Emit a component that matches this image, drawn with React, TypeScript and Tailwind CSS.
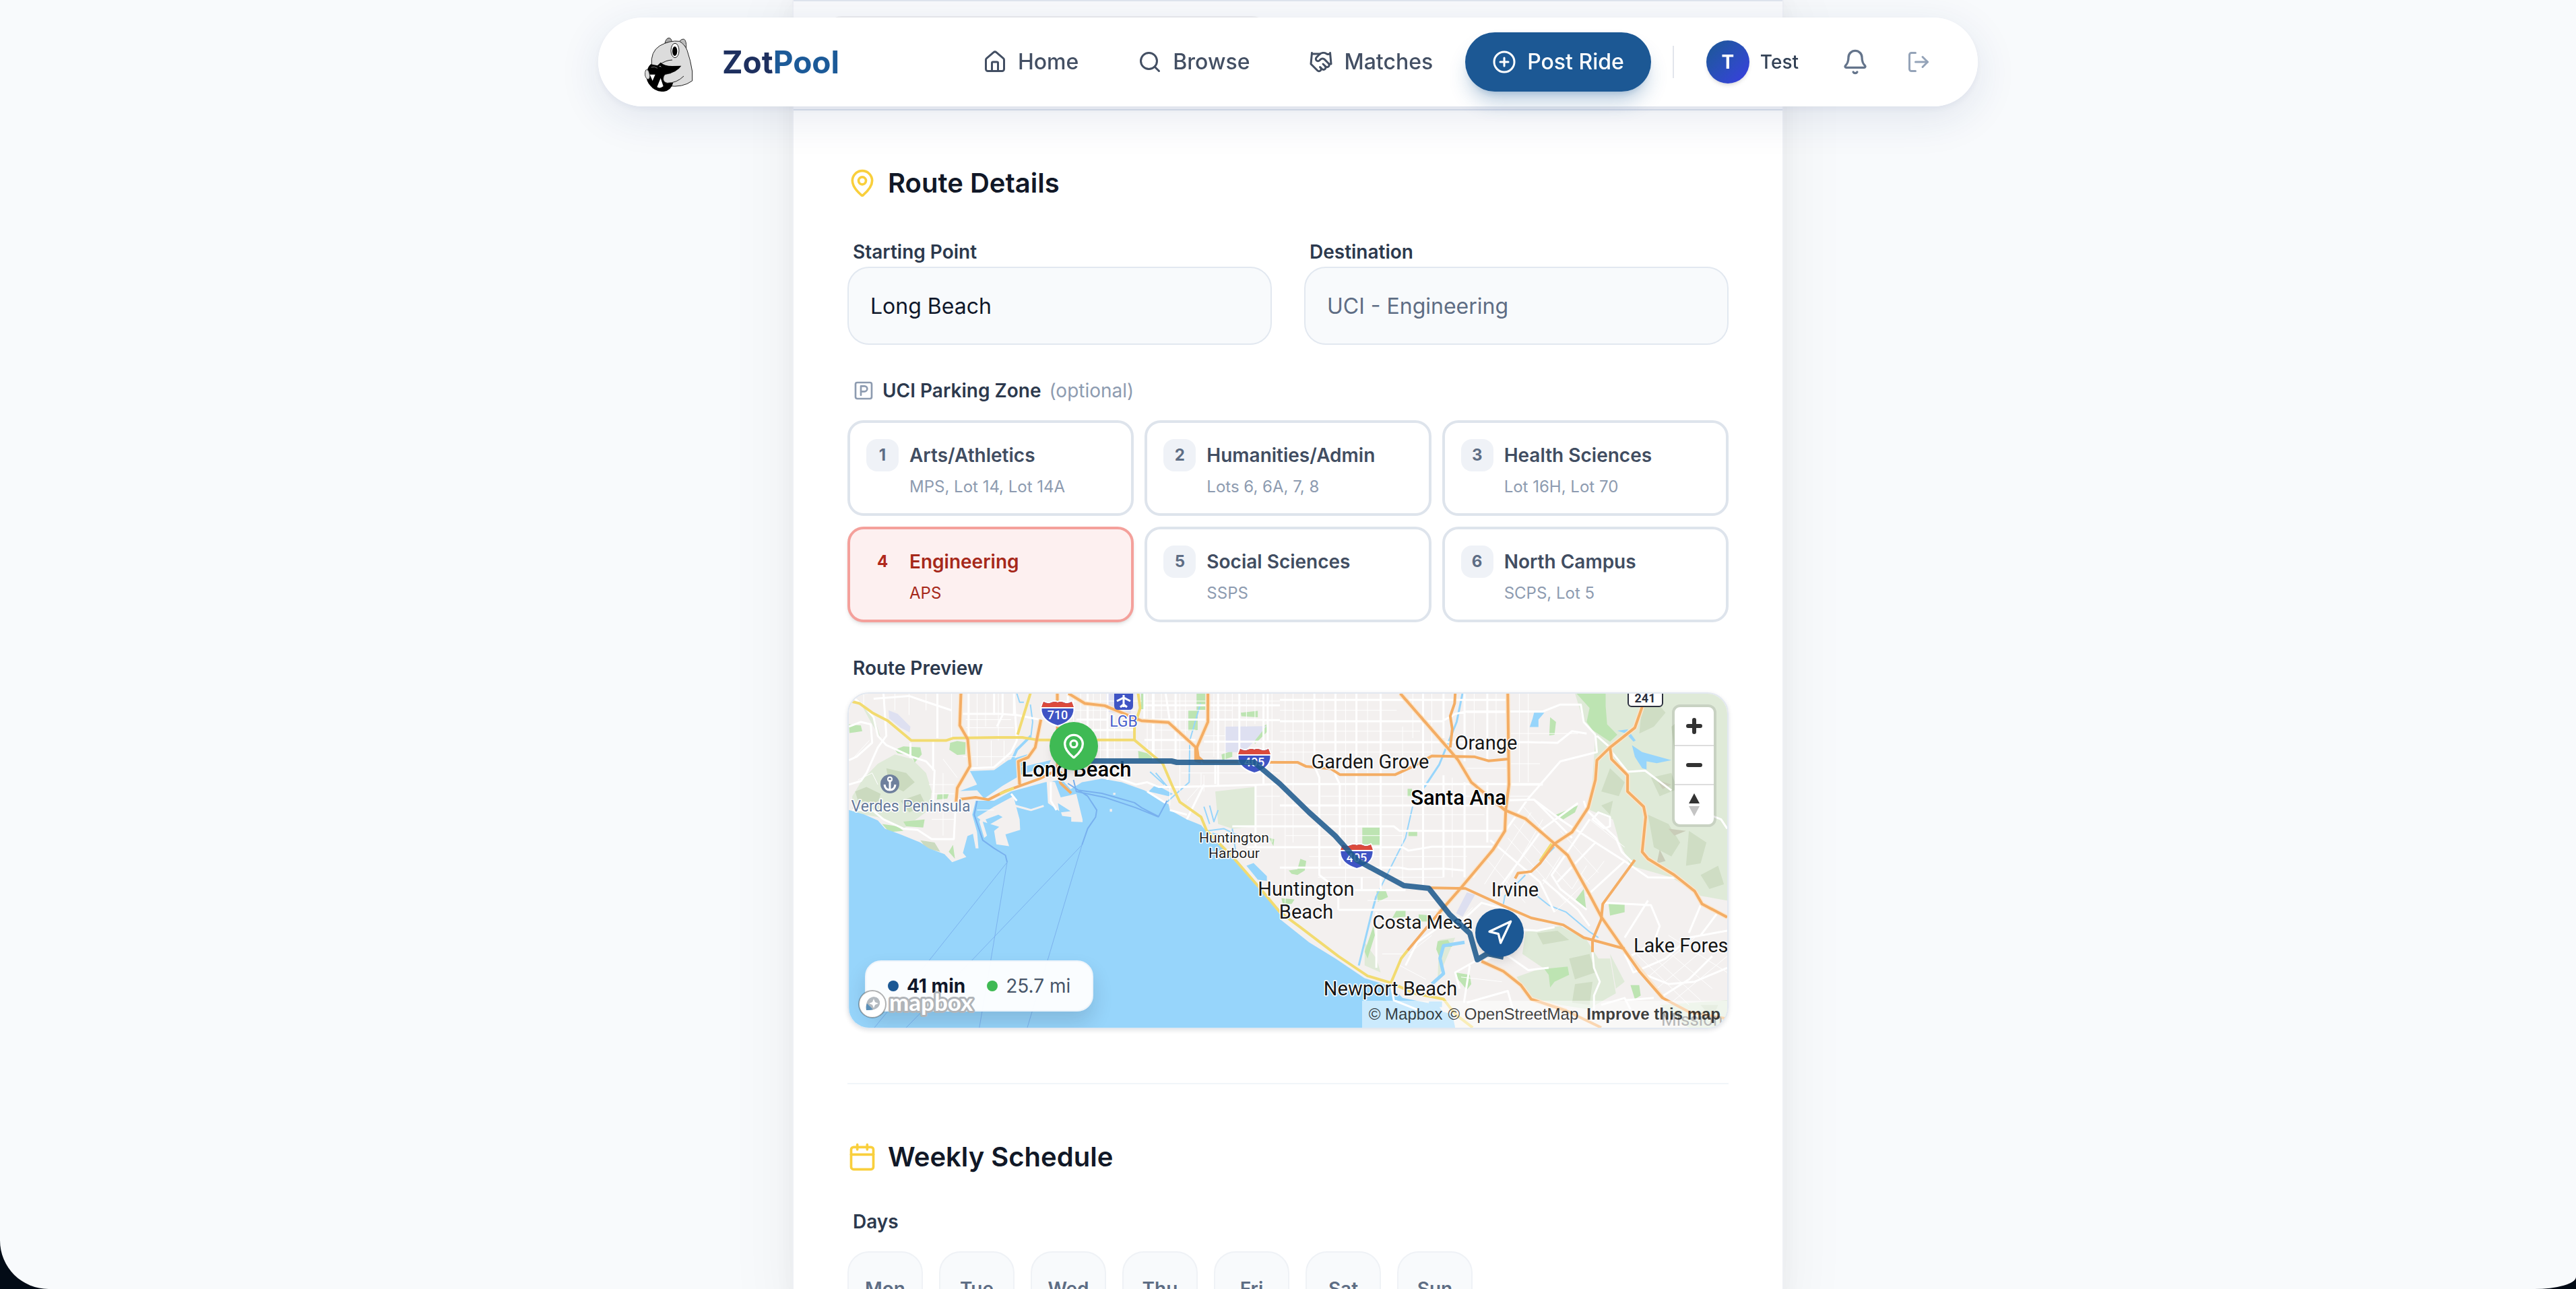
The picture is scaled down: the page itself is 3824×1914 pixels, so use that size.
import React, { useState } from "react";
import {
  Bell,
  Calendar,
  CirclePlus,
  Handshake,
  House,
  LogOut,
  MapPin,
  Navigation,
  Search,
  SquareParking,
} from "lucide-react";
import clsx from "clsx";

const zones = [
  { id: 1, name: "Arts/Athletics", lots: "MPS, Lot 14, Lot 14A" },
  { id: 2, name: "Humanities/Admin", lots: "Lots 6, 6A, 7, 8" },
  { id: 3, name: "Health Sciences", lots: "Lot 16H, Lot 70" },
  { id: 4, name: "Engineering", lots: "APS" },
  { id: 5, name: "Social Sciences", lots: "SSPS" },
  { id: 6, name: "North Campus", lots: "SCPS, Lot 5" },
];

const days = ["Mon", "Tue", "Wed", "Thu", "Fri", "Sat", "Sun"];

const navLinks = [
  { label: "Home", icon: House },
  { label: "Browse", icon: Search },
  { label: "Matches", icon: Handshake },
];

const Mascot = () => (
  <svg viewBox="42 24 252 264" className="h-[88px] w-[84px] shrink-0">
    <path d="M147 72 Q152 50 165 49 Q176 50 178 66Z" fill="#a9a9a9" stroke="#333" strokeWidth="3" />
    <path d="M212 64 Q222 52 232 54 Q244 62 242 94Z" fill="#bdbdbd" stroke="#333" strokeWidth="3" />
    <path
      d="M88 172 Q82 110 124 84 Q170 58 212 64 Q236 78 246 104 Q262 150 269 198 L269 240 Q225 272 160 262 Q100 240 88 172Z"
      fill="#dcdcdc"
      stroke="#222"
      strokeWidth="3"
    />
    <ellipse cx="192" cy="105" rx="18" ry="32" fill="#fff" stroke="#222" strokeWidth="3" />
    <ellipse cx="191" cy="108" rx="11" ry="21" fill="#000" />
    <path d="M124 168 Q150 148 180 147" fill="none" stroke="#222" strokeWidth="3" />
    <path
      d="M84 166 L114 172 L128 158 Q145 174 180 174 L220 173 Q200 204 146 213 L152 250 L184 248 Q176 282 142 288 Q104 290 82 262 Q62 240 64 212 Q68 180 84 166Z"
      fill="#000"
    />
    <path d="M80 212 L104 212 L92 240Z" fill="#fff" />
    <path d="M112 268 L128 228 L140 264 Q126 276 112 268Z" fill="#fff" />
    <path d="M86 180 Q100 174 114 184" fill="none" stroke="#777" strokeWidth="3" />
    <path d="M122 176 Q126 172 130 178" fill="none" stroke="#ddd" strokeWidth="3" />
    <path d="M62 192 Q68 186 74 196 Q84 220 76 232 Q64 236 59 216 Q57 200 62 192Z" fill="#dcdcdc" stroke="#444" strokeWidth="3" />
    <path
      d="M231 219 Q200 250 158 250 Q138 246 140 228 Q142 210 156 210 L200 208"
      fill="#dcdcdc"
      stroke="#222"
      strokeWidth="3"
    />
    <path d="M152 213 L200 200 L226 214 L196 238 L158 244Z" fill="#dcdcdc" />
  </svg>
);

const Navbar = () => (
  <header className="fixed inset-x-0 top-[26px] z-20 flex justify-center">
    <div className="flex w-full max-w-[2048px] items-center justify-between rounded-full bg-white/98 py-[22px] pr-[70px] pl-16 shadow-[0_16px_64px_rgba(30,58,120,0.11),0_4px_12px_rgba(30,58,120,0.05)]">
      <a href="#" className="flex items-center gap-9">
        <Mascot />
        <span className="text-[46px] leading-[64px] font-bold text-[#1e305f]">
          Zot<span className="text-[#1c5a98]">Pool</span>
        </span>
      </a>
      <div className="flex items-center">
        <nav className="flex items-center gap-2">
          {navLinks.map(({ label, icon: Icon }) => (
            <a
              key={label}
              href="#"
              className="flex h-[88px] items-center gap-4 rounded-full px-10 text-[32px] font-medium text-[#434f63]"
            >
              <Icon size={36} />
              {label}
            </a>
          ))}
          <a
            href="#"
            className="flex h-[88px] items-center gap-4 rounded-full bg-[#1c5894] px-10 text-[32px] font-medium text-white shadow-[0_20px_30px_-6px_rgba(28,88,148,0.3),0_8px_12px_-8px_rgba(28,88,148,0.3)]"
          >
            <CirclePlus size={36} />
            Post Ride
          </a>
        </nav>
        <div className="mx-8 h-12 w-0.5 bg-[#e2e5ec]" />
        <button className="flex items-center gap-4 px-4">
          <span className="flex h-16 w-16 items-center justify-center rounded-full bg-linear-to-br from-[#1c5894] to-[#3a3be2] text-[28px] font-bold text-white shadow-md">
            T
          </span>
          <span className="text-[28px] font-medium text-[#334155]">Test</span>
        </button>
        <button aria-label="Notifications" className="ml-12 text-[#64748b]">
          <Bell size={40} />
        </button>
        <button aria-label="Log out" className="ml-14 text-[#94a3b8]">
          <LogOut size={36} />
        </button>
      </div>
    </div>
  </header>
);

const SectionTitle = ({ icon, children }: { icon: React.ReactNode; children: React.ReactNode }) => (
  <h2 className="mb-12 flex items-center gap-4 text-[40px] leading-[56px] font-semibold text-[#111827]">
    <span className="text-[#f9cf3c]">{icon}</span>
    {children}
  </h2>
);

const Interstate = ({ x, y, label }: { x: number; y: number; label: string }) => (
  <g transform={`translate(${x} ${y})`}>
    <path d="M-21 -18 Q-14 -14 -9 -17 Q-4 -19 0 -17 Q4 -19 9 -17 Q14 -14 21 -18 Q27 -8 23 2 Q18 14 0 19 Q-18 14 -23 2 Q-27 -8 -21 -18Z" fill="#3f54c4" stroke="#fff" strokeWidth="2" />
    <path d="M-21 -17 Q-14 -13 -9 -16 Q-4 -18 0 -16 Q4 -18 9 -16 Q14 -13 21 -17 L24 -9 L-24 -9Z" fill="#db4a3c" />
    <path d="M-24 -8 H24" stroke="#fff" strokeWidth="2" />
    <text y="9" textAnchor="middle" className="fill-white font-['Roboto',sans-serif] text-[18px] font-medium">
      {label}
    </text>
  </g>
);

const places = [
  { name: "Huntington", x: 572, y: 221, style: "text-[21px] fill-[#1f1f1f]" },
  { name: "Harbour", x: 572, y: 244, style: "text-[21px] fill-[#1f1f1f]" },
  { name: "Huntington", x: 679, y: 300, style: "text-[29px] fill-[#161616]" },
  { name: "Beach", x: 679, y: 334, style: "text-[29px] fill-[#161616]" },
  { name: "Costa Mesa", x: 852, y: 349, style: "text-[28px] fill-[#161616]" },
  { name: "Newport Beach", x: 804, y: 448, style: "text-[29px] fill-[#161616]" },
  { name: "Orange", x: 946, y: 83, style: "text-[29px] fill-[#161616]" },
  { name: "Garden Grove", x: 774, y: 111, style: "text-[29px] fill-[#161616]" },
  { name: "Irvine", x: 989, y: 301, style: "text-[29px] fill-[#161616]" },
  { name: "Lake Forest", x: 1240, y: 384, style: "text-[29px] fill-[#161616]" },
  { name: "Santa Ana", x: 905, y: 165, style: "text-[31px] font-medium fill-black" },
  { name: "Long Beach", x: 338, y: 123, style: "text-[31px] font-medium fill-black" },
  { name: "LGB", x: 408, y: 49, style: "text-[23px] fill-[#4a60cc]" },
  { name: "Verdes Peninsula", x: 92, y: 175, style: "text-[23px] fill-[#64789a]" },
];

// west half of the basemap, drawn in its own tile units
const WestTile = () => (
  <g transform="translate(-20 -20) scale(0.42092 0.34439)" fill="none" strokeLinejoin="round">
    <path fill="#dfead8" d="M60 500L95 430L150 360L210 320L270 340L320 400L340 480L330 560L240 640L150 590L60 570ZM1340 480L1480 460V630L1400 640L1350 620ZM80 80L130 190L160 250L140 170Z" />
    <path fill="#cbdabf" d="M70 480L110 460L160 490L150 530L80 520ZM180 380L250 400L280 440L240 480L190 450ZM230 520L300 490L320 540L260 570ZM300 690L350 700L370 740L320 725Z" />
    <path fill="#bde4b2" d="M48 190L90 195L95 220L50 228ZM405 270L430 262L460 268L458 320L430 322L402 300ZM210 300L240 285L300 290L305 320L280 355L270 325L220 315ZM360 492L400 490L395 510L358 515ZM1274 57H1305V130H1274ZM1245 130H1278V215L1245 218ZM1078 57H1090V125H1078ZM1068 305L1100 315L1130 345L1070 340ZM1362 320L1400 305L1400 330L1365 345ZM1430 140L1490 132V160L1432 155ZM165 620L220 630L240 650L190 655ZM240 610L315 600L310 635L250 630ZM400 740L415 710L422 770ZM1530 680L1548 685L1545 715ZM1470 240L1520 190L1525 220L1480 275Z" />
    <path fill="#dee0f1" d="M1376 200L1520 198L1480 260L1440 310H1376ZM955 57H1055L1040 150L955 135ZM188 130L220 145L265 200L262 225L230 205L190 165Z" />
    <path fill="#97d5fb" d="M48 560L100 578L150 605L175 640L230 665L300 700L330 725L385 750L412 785L462 762L450 745L466 672L500 655L483 580L495 520L560 520L620 480L740 440L800 430L830 470L870 440L940 425L1010 440L1090 475L1175 535L1180 560L1240 600L1290 625L1330 680L1420 780L1500 900L1568 1010V1498H48ZM475 392L560 388L610 345L690 315L655 375L760 345L750 372L660 405L590 455L525 510L500 475L440 478L500 450ZM1105 480L1130 450L1190 490L1175 500ZM1450 800L1475 788L1522 845V865L1490 860Z" />
    <path stroke="#97d5fb" strokeWidth="4" vectorEffect="non-scaling-stroke" d="M560 470L600 410L640 300L690 240" />
    <path stroke="#97d5fb" strokeWidth="2" vectorEffect="non-scaling-stroke" d="M640 57L650 95H665M688 105L696 180L690 240M1288 100L1250 260L1248 440L1170 525M1110 395L1160 450M1130 400L1175 465M1300 545L1320 620M1320 540L1335 610L1350 560M1310 650L1370 640L1420 670M1330 660L1390 680M1400 640L1412 740" />
    <path fill="#f3f0ef" d="M500 590L560 545L628 500L650 600L652 645L600 665L613 716L568 708L560 650L578 632L520 610ZM745 430L775 440L795 505L850 490L872 600V612L832 610L832 590L800 585L796 570L830 565L785 530L790 565L750 530ZM485 660L500 655L505 725L495 725ZM515 590L535 670L525 680L508 610ZM980 486H988V494H980ZM968 555H976V567H968ZM560 590L600 555L620 560L590 600Z" />
    <path fill="#97d5fb" d="M530 600L575 580L590 590L540 625Z" />
    <path stroke="#f3f0ef" strokeWidth="3" vectorEffect="non-scaling-stroke" d="M630 540L690 560L735 542" />
    <path
      stroke="#fff"
      strokeWidth="1"
      vectorEffect="non-scaling-stroke"
      d="M100 57V120M210 57V130M260 57V150M320 57V130M410 57V260M500 57V250M530 57V200M575 57V260M460 205H630M460 170H620M450 330H640M500 260V370M550 260V370M595 260V350M840 57V330M865 57V320M910 57V350M935 57V340M985 150V340M1010 200V345M1100 57V300M1125 57V350M1150 57V360M1215 57V480M1235 57V250M1335 57V330M1375 57V350M1400 57V200M1450 57V200M1480 57V190M1540 57V700M790 90H1080M790 130H1060M850 215H1060M850 300H1080M1090 90H1568M1080 130H1400M1130 215H1270M1100 300H1270M1290 240H1375M1290 310H1375M1220 400H1568M1480 500H1568M1480 580H1568M60 340L120 260M80 430L130 400L150 450M330 450H420M340 490H425M340 600H420M380 400V670M500 560H560M1180 460V540M1240 520L1290 450V400M1300 410V480M380 340L430 420"
    />
    <path
      stroke="#fff"
      strokeWidth="3"
      vectorEffect="non-scaling-stroke"
      d="M48 60L100 110L135 160L150 240L180 280L270 330L320 350L350 390L345 520M48 200L90 180L125 190L130 270L75 330L48 345M48 450L90 435L110 400L150 290L180 240L170 57M135 80L260 68L300 85L410 130M60 560L130 560L170 600L240 640L290 645L340 685H418L425 525M265 270V335M345 260V390M360 57V250M450 145H580L640 150L720 170M470 250V57M560 57V150M590 57V150L570 200M630 57V145M480 380L560 375L620 310L640 260L630 57M820 57V260M850 170H960M960 57V430M890 57V260M1120 57V350M1090 57V170H1400L1568 172M1165 57L1180 180M1200 57V340M1350 57V460M1425 57V350M1510 57V450M1525 57V260M1090 108H1568M850 215H1060M860 258V345M980 415L1060 450L1100 440L1140 460L1215 460L1568 448M1100 480L1165 530M1180 560L1240 580M1340 448V350M1482 448V720M1400 630H1568M1450 720H1568M1240 600L1300 450M640 520L620 490M1090 258H1270M1300 265H1568M760 440V520L780 560"
    />
    <path stroke="#fbe6cd" strokeWidth="7" vectorEffect="non-scaling-stroke" d="M443 57L439 195L467 255L475 370L430 465L426 525M783 57V190M725 170L705 290L680 333L645 350L650 450M822 57L880 100L950 110L1080 175L1175 182L1272 290L1275 340M1314 57V180L1275 290" />
    <path
      stroke="#f2db70"
      strokeWidth="4"
      vectorEffect="non-scaling-stroke"
      d="M58 92L85 100L130 140L185 175L268 260H390L415 250L570 247L660 247L715 258H1055L1155 360L1190 460L1215 525L1290 590L1310 650L1400 760L1500 900L1568 1000M688 57L643 235M1068 57L1075 120L1055 200V258"
    />
    <path
      stroke="#f4ad64"
      strokeWidth="4"
      vectorEffect="non-scaling-stroke"
      d="M443 57L439 195L467 255L475 370L430 465L426 525M440 513L495 505L540 515L600 478L720 425L770 395L800 400M783 57V400L795 445L832 487M725 170L705 290L680 333L645 350L650 450M822 57L880 100L950 110L1080 175L1175 182L1272 290L1275 340M1314 57V180L1275 290L1280 330L1300 352L1568 354"
    />
    <path stroke="#f4ad64" strokeWidth="6" vectorEffect="non-scaling-stroke" d="M1273 290V345L1290 350" />
    <path stroke="#f2db70" strokeWidth="4" vectorEffect="non-scaling-stroke" d="M580 490L630 465" />
    <path
      stroke="#7cb2ee"
      strokeWidth="1"
      vectorEffect="non-scaling-stroke"
      d="M606 785L330 1210L138 1498M606 785L548 1210L508 1498M870 710L480 1210L250 1498M870 710L748 1210L677 1498"
    />
    <path
      stroke="#78b0ee"
      strokeWidth="2"
      vectorEffect="non-scaling-stroke"
      d="M500 520L490 580L520 690L560 725L600 755L606 785M820 445L890 500L922 560L918 590L890 640L870 710M840 430L850 480L950 505L1060 550L1140 590M860 475L940 488L1055 528L1080 550L1140 588L1170 520"
    />
  </g>
);

// east half of the basemap
const EastTile = () => (
  <g transform="translate(640 -20) scale(0.43367 0.34439)" fill="none" strokeLinejoin="round">
    <path fill="#dfead8" d="M1010 57H1531V950L1440 930L1340 850L1200 800L1160 690L1140 600L1060 560L1070 430L1080 240L1040 180ZM840 1085L960 1060L1050 1120L1090 1200L1130 1200L1150 1350L1080 1400L1060 1420L960 1400L860 1370L810 1280L900 1240L830 1180ZM1300 1400L1531 1380V1498H1400ZM545 1120L600 1110L560 1230L540 1290ZM290 1130L330 1200L345 1260L290 1230ZM1130 1180L1180 1300L1150 1330Z" />
    <path fill="#cfddc4" d="M1240 110L1290 95L1320 140L1280 200L1230 230ZM1340 200L1380 160L1440 190L1400 260L1350 300ZM1130 380L1180 440L1160 500L1100 480ZM1270 420L1340 400L1360 470L1300 500ZM1260 580L1330 620L1370 700L1340 760L1280 720ZM1400 650L1460 700L1440 790L1390 800ZM1440 840L1500 800L1520 880L1470 900ZM1400 300L1480 400L1440 430ZM1100 540L1140 520L1130 580ZM990 1200L1060 1180L1080 1260L1010 1290ZM1010 1310L1070 1300L1060 1400L1000 1390ZM880 1090L950 1080L990 1120L900 1140ZM1440 1400L1500 1400L1480 1460Z" />
    <path fill="#c9ccb8" d="M1330 640L1390 650L1350 670ZM1290 430L1340 450L1310 470ZM1450 230L1480 225L1470 260ZM1300 730L1320 780L1290 790Z" />
    <path fill="#bde4b2" d="M1015 57H1115V110L1120 190L1155 235L1130 265L1070 215L1050 180L1060 120ZM282 635H344V710H282ZM30 820L60 815L70 770L90 780L85 820L60 840L40 835ZM330 905L360 900L370 935L335 955ZM440 652H470V672H440ZM437 468H452V502H437ZM925 160L945 180L940 235L922 238ZM945 580L1020 540L1010 570L970 600ZM1010 950L1040 900L1048 985ZM1125 965L1180 962L1180 1000L1130 1015ZM905 1245L985 1235L990 1270L940 1300L925 1325L920 1270ZM540 1125L575 1120L590 1150L555 1150L545 1190L535 1160ZM1200 1315H1230L1235 1360L1215 1375ZM600 1260L650 1270L655 1310L640 1335L610 1290ZM290 1170L320 1060L325 1100L300 1200ZM400 990H430V1020L385 1025ZM475 1010L520 1015L515 1040H475ZM5 940L50 945L40 965L10 965Z" />
    <path fill="#dddff0" d="M640 915L668 925L625 1020L603 1005Z" />
    <path fill="#97d5fb" d="M0 1030L100 1130L190 1200L290 1285L380 1320L420 1370L540 1400L600 1498H0ZM1205 280L1240 310L1340 345L1290 358L1255 350V385L1240 380L1215 330ZM1155 218L1190 212L1218 260L1210 265L1185 230ZM870 140H905L885 170V202H855L865 165ZM510 1385H555V1410H510ZM560 1430L590 1440L600 1498H560Z" />
    <path stroke="#97d5fb" strokeWidth="5" vectorEffect="non-scaling-stroke" d="M632 1130L560 1145L548 1200L560 1265L520 1310" />
    <path stroke="#97d5fb" strokeWidth="3" vectorEffect="non-scaling-stroke" d="M625 57L605 180L545 365L495 460M330 930L315 1000L270 1230" />
    <path stroke="#97d5fb" strokeWidth="2" vectorEffect="non-scaling-stroke" d="M495 460L455 540L430 680L370 830L330 930M840 840L770 930L765 965M880 930L920 970L980 1000L1060 1085L1090 1110M940 720L920 745" />
    <path
      stroke="#fff"
      strokeWidth="1"
      vectorEffect="non-scaling-stroke"
      d="M18 57V960M45 57V700M80 57V360M150 57V260M225 57V900M300 57V630M420 200V890M455 57V250M520 57V320M590 420V850M665 57V320M740 57V320M820 57V440M850 57V440M0 130H400M0 220H480M0 310H520M140 500H700M0 580H700M20 670H420M100 760H640M130 850H560M300 950H540M640 140H780M640 380H780M790 230H1020M790 360H890M700 500H860M830 540L1060 880M860 570L700 880M900 600L740 950M960 650L1090 830M800 620L1000 900M780 680L980 960M900 880L960 760M1000 900L1050 800M700 760L840 960M940 1000L1080 830M1060 600L1180 720M1220 1180L1400 1400M1250 1160L1440 1380M1290 1130L1480 1330M1330 1100L1531 1260M1260 1280L1420 1110M1290 1330L1480 1130M1340 1390L1531 1190M600 1060L660 980M620 1280L760 1300M1110 780L1080 830M440 1180L520 1100M410 1230L500 1290M350 1180H420"
    />
    <path
      stroke="#fff"
      strokeWidth="3"
      vectorEffect="non-scaling-stroke"
      d="M118 57V370L135 420V840L200 905V990M190 57V410L205 450V800M262 57V700M345 57V900M490 57V890M560 57V250M560 410V850M632 57V350M632 440V850M710 57V340M710 440V700M0 85H780M0 177H555L600 145L640 135H900L960 105H1030L1040 180L1080 235M0 267H850L950 270L1000 220L1050 230M0 448H900M0 540H700M0 630H390L410 650H760M0 720H420L440 735L520 718H740M0 808H410L440 815L560 812L630 820M0 905H430M200 990H540M280 850V900M330 1000V1240M1080 235L1085 310L960 350L850 510L660 850M1085 240L1130 290M1130 300L1190 395L1250 390L1340 475M790 450H900M730 520L870 515L960 600L1080 700L1180 780L1260 850L1370 852M870 515L1000 680M1040 520L1050 560L1150 680L1170 740L1210 790M1020 530L900 640L760 880M1060 600L930 840L960 900L1050 990M720 690L890 870L940 1000M1110 640L1070 600L1090 570L1130 590V630L1110 640M900 860L1020 990L1060 1060M1080 700L950 870M1180 780L1050 930M1200 800L1110 960L1270 970L1300 1060L1280 1130L1200 1190M1260 950L1180 1110M1070 1172L1075 1240L1095 1300L1075 1360V1420M700 1210L760 1170L850 1250L920 1240M810 1010L830 1075L880 1080L940 1065M630 1030L690 960L780 990M560 1050L470 1130L430 1230M650 1230L630 1390M670 1210L600 1260L615 1330M380 1310L390 1380L470 1420M1180 1180L1210 1260L1320 1200L1400 1110L1531 1080M1230 1260L1330 1310L1420 1300L1531 1240M1300 1370L1400 1290L1480 1190M1440 970L1400 1090M1180 1380L1280 1370M1100 1400L1180 1370L1200 1420M1440 1100L1500 1000M1470 580L1510 600L1531 640M640 1390L780 1340L800 1430"
    />
    <path
      stroke="#fbe6cd"
      strokeWidth="7"
      vectorEffect="non-scaling-stroke"
      d="M412 57L580 300L610 345L655 440L770 560L840 597L940 705L985 755L1060 925L1100 1020L1180 1165L1310 1370M780 57L784 450L773 560L770 650L730 730L620 895L540 1010M1240 115L1215 205L1130 290L1085 345L1080 430L1055 550L1000 655L940 705M1130 290L1135 340L1190 410V480L1245 545L1252 590L1240 740L1260 770L1350 840L1420 910L1445 965L1531 1022M690 1212L765 1255L825 1315L860 1375L980 1425"
    />
    <path stroke="#f2db70" strokeWidth="4" vectorEffect="non-scaling-stroke" d="M0 1000L70 1065L200 1190L300 1275L380 1305L460 1350L560 1375L600 1440L660 1498M437 1165L415 1200L395 1260L380 1305M930 705L890 780" />
    <path
      stroke="#f4ad64"
      strokeWidth="4"
      vectorEffect="non-scaling-stroke"
      d="M0 354H60L90 372L175 382L205 407H395L450 375L520 327L665 330L715 348L782 340M412 57L580 300L610 345L655 440L770 560L840 597L940 705L985 755L1060 925L1100 1020L1180 1165L1230 1255L1310 1370L1400 1430L1531 1460M600 57L598 100L583 155L590 210L583 290M780 57L784 450L773 560L770 650L730 730L620 895L540 1010L437 1165M510 895L635 898L760 970L860 1025L970 1055L1040 1110L1180 1158M1240 115L1215 205L1130 290L1085 345L1080 430L1055 550L1000 655L940 705L890 790L860 825L815 832L805 855M1130 290L1135 340L1190 410V480L1245 545L1252 590L1240 740L1260 770L1350 840L1420 910L1445 965L1531 1022M1215 775L1105 965L1100 1030L1070 1120V1172M690 1212L765 1255L825 1315L860 1375L980 1425L1100 1498"
    />
  </g>
);

const RouteMap = () => (
  <svg
    viewBox="0 0 1304 496"
    preserveAspectRatio="xMidYMid slice"
    role="img"
    aria-label="Map of the route from Long Beach to UCI"
    className="block h-full w-full bg-[#f3f0ef]"
  >
    <WestTile />
    <EastTile />
    <path d="M394 -4 H422 V18 Q422 24 416 24 H400 Q394 24 394 18Z" fill="#3f54c4" />
    <path d="M408 2 V20 M398 11 L408 6 L418 11 M403 20 L408 16 L413 20" stroke="#fff" strokeWidth="3" fill="none" />
    <circle cx="61" cy="134" r="14" fill="#6f809d" />
    <path d="M61 128 V142 M53 135 Q54 143 61 143 Q68 143 69 135" stroke="#fff" strokeWidth="3" fill="none" />
    <circle cx="61" cy="127" r="3" fill="none" stroke="#fff" strokeWidth="2" />
    <rect x="1157" y="-14" width="51" height="33" rx="5" fill="#fff" stroke="#2b2f3d" strokeWidth="2" />
    <text x="1182" y="13" textAnchor="middle" className="fill-[#2b2f3d] font-['Roboto',sans-serif] text-[18px] font-bold">
      241
    </text>
    <Interstate x={310} y={29} label="710" />
    <Interstate x={602} y={99} label="405" />
    <Interstate x={754} y={241} label="405" />
    <g textAnchor="middle" className="font-['Roboto',sans-serif] [paint-order:stroke]" stroke="#fff" strokeWidth="3" strokeLinejoin="round">
      {places.map((p) => (
        <text key={`${p.name}-${p.y}`} x={p.x} y={p.y} className={p.style}>
          {p.name}
        </text>
      ))}
    </g>
    <text x="1206" y="493" className="fill-[#6d6d6d] font-['Roboto',sans-serif] text-[26px]">
      Mission
    </text>
    <path
      d="M334 100 H479 L487 102 H602 L640 134 L683 176 L722 211 L754 247 L824 285 L861 289 L892 328 L922 356 L933 395 L948 386 L972 391"
      fill="none"
      stroke="#1f5a8e"
      strokeOpacity="0.88"
      strokeWidth="8"
      strokeLinejoin="round"
    />
  </svg>
);

const RoutePreview = () => (
  <div className="relative h-[500px] overflow-hidden rounded-[32px] border-2 border-[#e2e8f0] shadow-[0_2px_6px_rgba(15,23,42,0.12)]">
    <RouteMap />
    <div className="absolute top-[42px] left-[298px] flex h-[72px] w-[72px] items-center justify-center rounded-full bg-[#3fba54] text-white shadow-lg">
      <MapPin size={40} />
    </div>
    <div className="absolute top-[319px] left-[930px] flex h-[72px] w-[72px] items-center justify-center rounded-full bg-[#1c5894] text-white shadow-lg">
      <Navigation size={40} />
    </div>
    <div className="absolute bottom-6 left-6 flex items-center gap-8 rounded-3xl border-2 border-[#eef4fa] bg-white/95 px-8 py-4 text-[28px] leading-10 shadow-[0_16px_30px_rgba(15,23,42,0.14)]">
      <span className="flex items-center gap-3 font-bold text-[#0f172a]">
        <span className="h-4 w-4 rounded-full bg-[#1c5894]" />
        41 min
      </span>
      <span className="flex items-center gap-3 text-[#475569]">
        <span className="h-4 w-4 rounded-full bg-[#3fba54]" />
        25.7 mi
      </span>
    </div>
    <a href="#" aria-label="Mapbox homepage" className="absolute bottom-2 left-3">
      <svg viewBox="0 0 180 54" className="h-[54px] w-[180px]">
        <circle cx="23" cy="27" r="20" fill="#fff" stroke="#000" strokeOpacity="0.3" strokeWidth="2" />
        <path d="M14 36 Q12 18 25 16 Q35 17 34 27 Q31 37 14 36Z" fill="#b4bac0" />
        <path d="M14 36 Q13 29 15 26 L24 35 Q20 36 14 36Z" fill="#5a8fb8" />
        <path d="M25 19 L27 24 L32 26 L27 28 L25 33 L23 28 L18 26 L23 24Z" fill="#fff" />
        <text
          x="48"
          y="37"
          stroke="#b0b4b8"
          strokeWidth="6"
          strokeLinejoin="round"
          className="fill-white font-['Lato',sans-serif] text-[35px] font-bold [paint-order:stroke]"
        >
          mapbox
        </text>
      </svg>
    </a>
    <div className="absolute top-5 right-5 flex flex-col divide-y-2 divide-[#dddddd] overflow-hidden rounded-lg bg-white text-[#333333] outline-4 outline-black/10">
      <button aria-label="Zoom in" className="flex h-[58px] w-[58px] items-center justify-center">
        <svg viewBox="0 0 24 24" className="h-6 w-6">
          <path d="M12 3 V21 M3 12 H21" stroke="currentColor" strokeWidth="6" strokeLinecap="round" />
        </svg>
      </button>
      <button aria-label="Zoom out" className="flex h-[58px] w-[58px] items-center justify-center">
        <svg viewBox="0 0 24 24" className="h-6 w-6">
          <path d="M3 12 H21" stroke="currentColor" strokeWidth="6" strokeLinecap="round" />
        </svg>
      </button>
      <button aria-label="Reset bearing to north" className="flex h-[58px] w-[58px] items-center justify-center">
        <svg viewBox="0 0 16 36" className="h-9 w-4">
          <path d="M8 1 L16 16 H0Z" fill="currentColor" />
          <path d="M8 35 L16 20 H0Z" fill="#c4c4c4" />
        </svg>
      </button>
    </div>
    <div className="absolute right-0 bottom-0 flex gap-2 bg-white/50 px-[10px] font-['Liberation_Sans',Arial,sans-serif] text-[24px] leading-10 text-black/75">
      <a href="#">© Mapbox</a>
      <a href="#">© OpenStreetMap</a>
      <a href="#" className="ml-1 font-bold">
        Improve this map
      </a>
    </div>
  </div>
);

const App: React.FC = () => {
  const [start, setStart] = useState("Long Beach");
  const [zone, setZone] = useState(4);
  const [selectedDays, setSelectedDays] = useState<string[]>([]);

  const toggleDay = (day: string) => {
    setSelectedDays((prev) =>
      prev.includes(day) ? prev.filter((d) => d !== day) : [...prev, day]
    );
  };

  return (
    <div className="h-screen overflow-hidden bg-[#030b16] font-['Inter',sans-serif]">
      <div className="h-full overflow-hidden rounded-br-[62px_18px] rounded-bl-[72px] bg-[#f8fafc]">
        <Navbar />
        <main className="mx-auto w-full max-w-[1472px] border-x-2 border-[#eef0f4] bg-white shadow-[0_0_100px_rgba(15,23,42,0.06),0_0_30px_rgba(15,23,42,0.04)]">
          <div className="h-[164px] border-y-2 border-[#dfe5ee] bg-[#f9fafc] px-11 pt-[22px]">
            <div className="mr-auto h-[120px] w-1/2 max-w-[664px] rounded-[28px] border-2 border-[#ececee]" />
          </div>

          <form className="px-20" onSubmit={(e) => e.preventDefault()}>
            <section className="border-b-2 border-[#f1f5f9] py-20">
              <SectionTitle icon={<MapPin size={44} />}>Route Details</SectionTitle>

              <div className="grid grid-cols-2 gap-12">
                <div>
                  <label htmlFor="start" className="ml-2 block pt-1 text-[28px] leading-[44px] font-semibold text-[#2c394d]">
                    Starting Point
                  </label>
                  <input
                    id="start"
                    value={start}
                    onChange={(e) => setStart(e.target.value)}
                    className="block h-[116px] w-full rounded-[32px] border-2 border-[#e2e8f0] bg-[#f8fafc] px-8 text-[32px] text-[#0f172a]"
                  />
                </div>
                <div>
                  <label htmlFor="destination" className="ml-2 block pt-1 text-[28px] leading-[44px] font-semibold text-[#2c394d]">
                    Destination
                  </label>
                  <input
                    id="destination"
                    readOnly
                    value="UCI - Engineering"
                    className="block h-[116px] w-full rounded-[32px] border-2 border-[#e2e8f0] bg-[#f8fafc] px-8 text-[32px] text-[#5e6d84]"
                  />
                </div>
              </div>

              <div className="mt-12 ml-2 flex items-center gap-3 text-[28px] leading-10">
                <SquareParking size={32} className="text-[#8d9bb0]" />
                <span className="font-semibold text-[#2c394d]">UCI Parking Zone</span>
                <span className="text-[#8d9bb0]">(optional)</span>
              </div>
              <div className="mt-6 grid grid-cols-3 gap-4">
                {zones.map((z) => {
                  const active = z.id === zone;
                  return (
                    <button
                      key={z.id}
                      type="button"
                      aria-pressed={active}
                      onClick={() => setZone(z.id)}
                      className={clsx(
                        "rounded-3xl border-4 p-6 text-left",
                        active ? "border-[#f4a09b] bg-[#fdf0f0] shadow-md" : "border-[#dee4ec] bg-white"
                      )}
                    >
                      <span className="flex items-center gap-4">
                        <span
                          className={clsx(
                            "flex h-12 w-12 items-center justify-center rounded-2xl text-[24px] font-bold",
                            active ? "text-[#b0281c]" : "bg-[#eff2f7] text-[#5e6d84]"
                          )}
                        >
                          {z.id}
                        </span>
                        <span className={clsx("text-[28px] font-semibold", active ? "text-[#a6281a]" : "text-[#414d61]")}>
                          {z.name}
                        </span>
                      </span>
                      <span
                        className={clsx(
                          "mt-2 ml-16 block text-[24px] leading-[30px]",
                          active ? "text-[#a6281a]" : "text-[#8d9bb0]"
                        )}
                      >
                        {z.lots}
                      </span>
                    </button>
                  );
                })}
              </div>

              <p className="mt-12 mb-4 ml-2 text-[28px] leading-10 font-semibold text-[#2c394d]">Route Preview</p>
              <RoutePreview />
            </section>

            <section className="pt-20">
              <SectionTitle icon={<Calendar size={44} />}>Weekly Schedule</SectionTitle>
              <p className="mb-6 ml-2 text-[28px] leading-10 font-semibold text-[#2c394d]">Days</p>
              <div className="flex gap-6">
                {days.map((day) => (
                  <button
                    key={day}
                    type="button"
                    aria-pressed={selectedDays.includes(day)}
                    onClick={() => toggleDay(day)}
                    className="h-28 w-28 rounded-[32px] border-2 border-[#eff2f6] bg-[#f8fafc] text-[28px] font-semibold text-[#5e6d84]"
                  >
                    {day}
                  </button>
                ))}
              </div>
            </section>
          </form>
        </main>
      </div>
    </div>
  );
};

export default App;
